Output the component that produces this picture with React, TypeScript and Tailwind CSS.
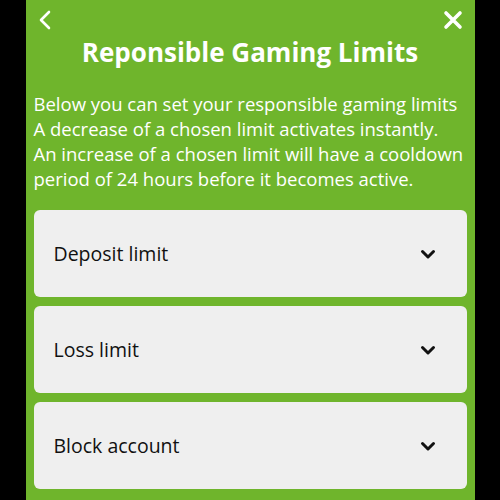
import React from 'react';

const LIMITS = ['Deposit limit', 'Loss limit', 'Block account'];

const INTRO = [
  'Below you can set your responsible gaming limits',
  'A decrease of a chosen limit activates instantly.',
  'An increase of a chosen limit will have a cooldown',
  'period of 24 hours before it becomes active.',
];

function ChevronDown() {
  return (
    <svg width="16" height="12" viewBox="0 0 16 12" fill="none">
      <path d="M2.5 3.5L8 9L13.5 3.5" stroke="#111" strokeWidth="3" strokeLinecap="round" strokeLinejoin="round" />
    </svg>
  );
}

export default function App() {
  return (
    <div className="w-[500px] h-[500px] bg-black flex justify-center overflow-hidden" style={{ fontFamily: '"Open Sans", Lato, sans-serif' }}>
      <div className="w-[449px] h-full bg-[#6fb52c] px-2 flex flex-col">
        <div className="flex justify-between items-center h-[35px] px-1 pt-1">
          <svg width="14" height="20" viewBox="0 0 14 20" fill="none">
            <path d="M11 2L3 10L11 18" stroke="#fff" strokeWidth="2.6" strokeLinecap="round" strokeLinejoin="round" />
          </svg>
          <svg width="20" height="20" viewBox="0 0 20 20" fill="none">
            <path d="M3 3L17 17M17 3L3 17" stroke="#fff" strokeWidth="3.6" strokeLinecap="round" />
          </svg>
        </div>
        <h1 className="text-white text-[26px] font-bold text-center leading-[34px]">
          Reponsible Gaming Limits
        </h1>
        <p className="text-white text-[18.5px] leading-[25px] mt-[22px] font-medium whitespace-nowrap">
          {INTRO.map((line) => (
            <span key={line} className="block">{line}</span>
          ))}
        </p>
        <div className="flex flex-col gap-[9px] mt-[19px]">
          {LIMITS.map((label) => (
            <div
              key={label}
              className="h-[87px] bg-[#efefef] rounded-[6px] flex items-center justify-between pl-[20px] pr-[31px]"
            >
              <span className="text-[19.5px] text-[#111]">{label}</span>
              <ChevronDown />
            </div>
          ))}
        </div>
      </div>
    </div>
  );
}
